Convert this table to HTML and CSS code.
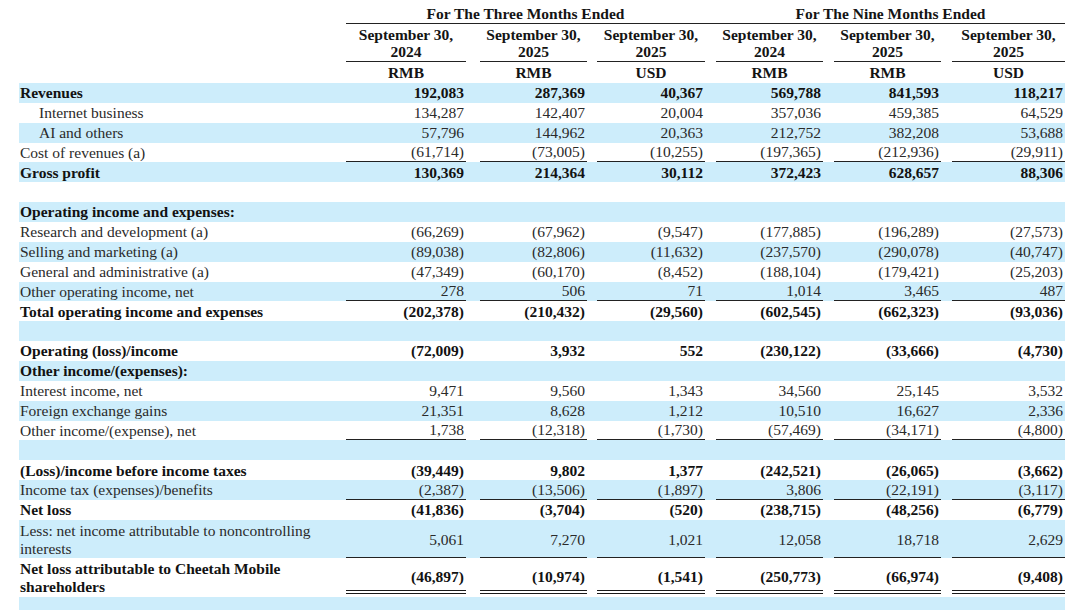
FILE: index.html
```html
<!DOCTYPE html>
<html>
<head>
<meta charset="utf-8">
<link rel="stylesheet" href="styles.css">
<title>Cheetah Mobile</title>
</head>
<body>
<div class="sheet">
  <div class="row h1">
    <div class="lbl"></div>
    <div class="span3 first">For The Three Months Ended</div>
    <div class="span3 second">For The Nine Months Ended</div>
  </div>
  <div class="row h2">
    <div class="lbl"></div>
    <div class="c">September 30,<br>2024</div>
    <div class="c">September 30,<br>2025</div>
    <div class="c">September 30,<br>2025</div>
    <div class="c">September 30,<br>2024</div>
    <div class="c">September 30,<br>2025</div>
    <div class="c">September 30,<br>2025</div>
  </div>
  <div class="row h3">
    <div class="lbl"></div>
    <div class="c">RMB</div>
    <div class="c">RMB</div>
    <div class="c">USD</div>
    <div class="c">RMB</div>
    <div class="c">RMB</div>
    <div class="c">USD</div>
  </div>

  <div class="body">
    <div class="row b">
      <div class="lbl">Revenues</div>
      <div class="c">192,083</div><div class="c">287,369</div><div class="c">40,367</div>
      <div class="c">569,788</div><div class="c">841,593</div><div class="c">118,217</div>
    </div>
    <div class="row">
      <div class="lbl indent">Internet business</div>
      <div class="c">134,287</div><div class="c">142,407</div><div class="c">20,004</div>
      <div class="c">357,036</div><div class="c">459,385</div><div class="c">64,529</div>
    </div>
    <div class="row">
      <div class="lbl indent">AI and others</div>
      <div class="c">57,796</div><div class="c">144,962</div><div class="c">20,363</div>
      <div class="c">212,752</div><div class="c">382,208</div><div class="c">53,688</div>
    </div>
    <div class="row ul">
      <div class="lbl">Cost of revenues (a)</div>
      <div class="c">(61,714)</div><div class="c">(73,005)</div><div class="c">(10,255)</div>
      <div class="c">(197,365)</div><div class="c">(212,936)</div><div class="c">(29,911)</div>
    </div>
    <div class="row b">
      <div class="lbl">Gross profit</div>
      <div class="c">130,369</div><div class="c">214,364</div><div class="c">30,112</div>
      <div class="c">372,423</div><div class="c">628,657</div><div class="c">88,306</div>
    </div>
    <div class="row"><div class="lbl"></div></div>
    <div class="row b">
      <div class="lbl">Operating income and expenses:</div>
    </div>
    <div class="row">
      <div class="lbl">Research and development (a)</div>
      <div class="c">(66,269)</div><div class="c">(67,962)</div><div class="c">(9,547)</div>
      <div class="c">(177,885)</div><div class="c">(196,289)</div><div class="c">(27,573)</div>
    </div>
    <div class="row">
      <div class="lbl">Selling and marketing (a)</div>
      <div class="c">(89,038)</div><div class="c">(82,806)</div><div class="c">(11,632)</div>
      <div class="c">(237,570)</div><div class="c">(290,078)</div><div class="c">(40,747)</div>
    </div>
    <div class="row">
      <div class="lbl">General and administrative (a)</div>
      <div class="c">(47,349)</div><div class="c">(60,170)</div><div class="c">(8,452)</div>
      <div class="c">(188,104)</div><div class="c">(179,421)</div><div class="c">(25,203)</div>
    </div>
    <div class="row ul">
      <div class="lbl">Other operating income, net</div>
      <div class="c">278</div><div class="c">506</div><div class="c">71</div>
      <div class="c">1,014</div><div class="c">3,465</div><div class="c">487</div>
    </div>
    <div class="row b">
      <div class="lbl">Total operating income and expenses</div>
      <div class="c">(202,378)</div><div class="c">(210,432)</div><div class="c">(29,560)</div>
      <div class="c">(602,545)</div><div class="c">(662,323)</div><div class="c">(93,036)</div>
    </div>
    <div class="row"><div class="lbl"></div></div>
    <div class="row b">
      <div class="lbl">Operating (loss)/income</div>
      <div class="c">(72,009)</div><div class="c">3,932</div><div class="c">552</div>
      <div class="c">(230,122)</div><div class="c">(33,666)</div><div class="c">(4,730)</div>
    </div>
    <div class="row b">
      <div class="lbl">Other income/(expenses):</div>
    </div>
    <div class="row">
      <div class="lbl">Interest income, net</div>
      <div class="c">9,471</div><div class="c">9,560</div><div class="c">1,343</div>
      <div class="c">34,560</div><div class="c">25,145</div><div class="c">3,532</div>
    </div>
    <div class="row">
      <div class="lbl">Foreign exchange gains</div>
      <div class="c">21,351</div><div class="c">8,628</div><div class="c">1,212</div>
      <div class="c">10,510</div><div class="c">16,627</div><div class="c">2,336</div>
    </div>
    <div class="row ul">
      <div class="lbl">Other income/(expense), net</div>
      <div class="c">1,738</div><div class="c">(12,318)</div><div class="c">(1,730)</div>
      <div class="c">(57,469)</div><div class="c">(34,171)</div><div class="c">(4,800)</div>
    </div>
    <div class="row"><div class="lbl"></div></div>
    <div class="row b">
      <div class="lbl">(Loss)/income before income taxes</div>
      <div class="c">(39,449)</div><div class="c">9,802</div><div class="c">1,377</div>
      <div class="c">(242,521)</div><div class="c">(26,065)</div><div class="c">(3,662)</div>
    </div>
    <div class="row ul">
      <div class="lbl">Income tax (expenses)/benefits</div>
      <div class="c">(2,387)</div><div class="c">(13,506)</div><div class="c">(1,897)</div>
      <div class="c">3,806</div><div class="c">(22,191)</div><div class="c">(3,117)</div>
    </div>
    <div class="row b">
      <div class="lbl">Net loss</div>
      <div class="c">(41,836)</div><div class="c">(3,704)</div><div class="c">(520)</div>
      <div class="c">(238,715)</div><div class="c">(48,256)</div><div class="c">(6,779)</div>
    </div>
    <div class="row tall ul">
      <div class="lbl">Less: net income attributable to noncontrolling interests</div>
      <div class="c">5,061</div><div class="c">7,270</div><div class="c">1,021</div>
      <div class="c">12,058</div><div class="c">18,718</div><div class="c">2,629</div>
    </div>
    <div class="row tall b dbl">
      <div class="lbl">Net loss attributable to Cheetah Mobile shareholders</div>
      <div class="c">(46,897)</div><div class="c">(10,974)</div><div class="c">(1,541)</div>
      <div class="c">(250,773)</div><div class="c">(66,974)</div><div class="c">(9,408)</div>
    </div>
    <div class="row end"><div class="lbl"></div></div>
  </div>
</div>
</body>
</html>
```

FILE: styles.css
```css
html, body {
  margin: 0;
  padding: 0;
  background: #ffffff;
}

body {
  font-family: "Liberation Serif", "Times New Roman", serif;
  font-size: 15.5px;
  line-height: 17.4px;
  color: #2a2a2a;
  overflow: hidden;
}

.sheet {
  margin-left: 19px;
  width: 1046px;
}

.row {
  display: grid;
  grid-template-columns: 327px 120px 121px 118px 118px 118px 124px;
  box-sizing: border-box;
}

.row > .c:nth-child(3) { margin-left: 14px; }
.row > .c:nth-child(4) { margin-left: 10px; }
.row > .c:nth-child(n+5) { margin-left: 11px; }

.lbl {
  padding-left: 1px;
}

.indent {
  padding-left: 20px;
}

/* header */
.h1, .h2, .h3 {
  font-weight: bold;
  color: #141414;
}

.h1 {
  height: 24px;
}

.h1 .span3 {
  box-sizing: border-box;
  padding-top: 5px;
  text-align: center;
  border-bottom: 1px solid #222;
}

.h1 .first {
  grid-column: 2 / 5;
}

.h1 .second {
  grid-column: 5 / 8;
  padding-left: 11px;
}

.h2 {
  height: 38px;
}

.h2 .c {
  box-sizing: border-box;
  padding-top: 2px;
  text-align: center;
  border-bottom: 1px solid #222;
  height: 38px;
}

.h3 {
  height: 21px;
}

.h3 .c {
  padding-top: 2px;
  text-align: center;
}

/* body rows */
.body .row {
  height: 19.86px;
  align-items: center;
}

.body .row:nth-child(odd) {
  background: #cdedfb;
}

.body .row .c {
  text-align: right;
  padding-right: 2px;
}

.body .row.b {
  font-weight: bold;
  color: #121212;
}

.body .row.ul .c {
  align-self: stretch;
  box-sizing: border-box;
  display: flex;
  align-items: center;
  justify-content: flex-end;
  border-bottom: 1px solid #222;
}

.body .row.tall {
  height: 38px;
  align-items: start;
}

.body .row.tall .lbl {
  padding-top: 2.5px;
}

.body .row.tall .c {
  display: block;
  align-self: stretch;
  box-sizing: border-box;
  padding-top: 11px;
}

.body .row.tall.ul .c {
  height: 38px;
}

.body .row.dbl .c {
  height: 36px;
  padding-top: 10px;
  border-bottom: 4px double #1a1a1a;
}

.body .row.end {
  height: 40px;
  margin-top: 1px;
}
```
